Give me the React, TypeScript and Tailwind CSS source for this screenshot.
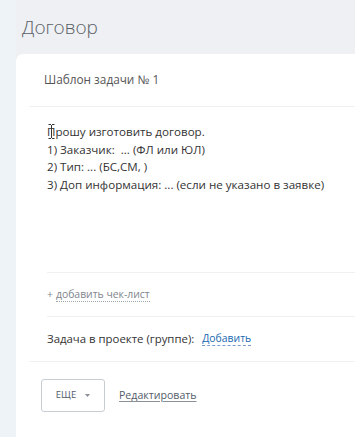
export default function App() {
  return (
    <div
      className="flex h-[437px] w-[355px] overflow-hidden bg-[#eef0f3] text-[#535c69]"
      style={{ fontFamily: '"Open Sans", "Noto Sans", sans-serif' }}
    >
      <div className="w-[16px] shrink-0 bg-[#eef3f8]" />
      <div className="flex min-w-0 flex-1 flex-col">
        <div className="h-[54px] shrink-0 pl-[6px] pt-[14px] text-[19px] font-light leading-[26px] text-[#5a5f66]">
          Договор
        </div>
        <div className="flex flex-1 flex-col rounded-tl-[7px] bg-white pl-[13px]">
          <div className="flex h-[53px] items-center border-b border-[#eef0f2] pl-[15px] text-[11.8px] text-[#555]">
            Шаблон задачи № 1
          </div>
          <div className="pl-[18px]">
            <div className="h-[166px] border-b border-[#eef0f2] pt-[16px] text-[11.6px] leading-[17.7px] text-[#333]">
              <div className="relative">
                <svg className="absolute left-[1px] top-[1px]" width="7" height="15" viewBox="0 0 7 15">
                  <path d="M0.5 0.5h2.5M4 0.5h2.5M3.5 1v13M0.5 14.5h2.5M4 14.5h2.5" stroke="#333" strokeWidth="1" fill="none" />
                </svg>
                Прошу изготовить договор.
              </div>
              <div>1) Заказчик:&nbsp; ... (ФЛ или ЮЛ)</div>
              <div>2) Тип: ... (БС,СМ, )</div>
              <div>3) Доп информация: ... (если не указано в заявке)</div>
            </div>
            <div className="flex h-[44px] items-center border-b border-[#eef0f2] text-[10.4px] text-[#80868e]">
              <span>+</span>
              <span className="ml-[3px] border-b border-dotted border-[#a0a6ad] leading-[13px]">добавить чек-лист</span>
            </div>
            <div className="flex h-[44px] items-center gap-[8px] text-[11.4px] text-[#333]">
              <span>Задача в проекте (группе):</span>
              <span className="border-b border-dashed border-[#7a9ccc] text-[10.4px] leading-[13px] text-[#2067b0]">Добавить</span>
            </div>
          </div>
          <div className="flex items-center border-t border-[#eef0f2] pl-[12px] pt-[17px]">
            <button className="flex h-[33px] w-[64px] items-center justify-center gap-[9px] rounded-[3px] border border-[#c6cdd3] text-[9.5px] text-[#535c69]">
              <span>ЕЩЕ</span>
              <svg width="5" height="3" viewBox="0 0 5 3">
                <path d="M0 0h5L2.5 3z" fill="#8a9099" />
              </svg>
            </button>
            <span className="ml-[14px] text-[10.6px] text-[#535c69] underline decoration-[#8a9099] underline-offset-[2px]">
              Редактировать
            </span>
          </div>
        </div>
      </div>
    </div>
  );
}
